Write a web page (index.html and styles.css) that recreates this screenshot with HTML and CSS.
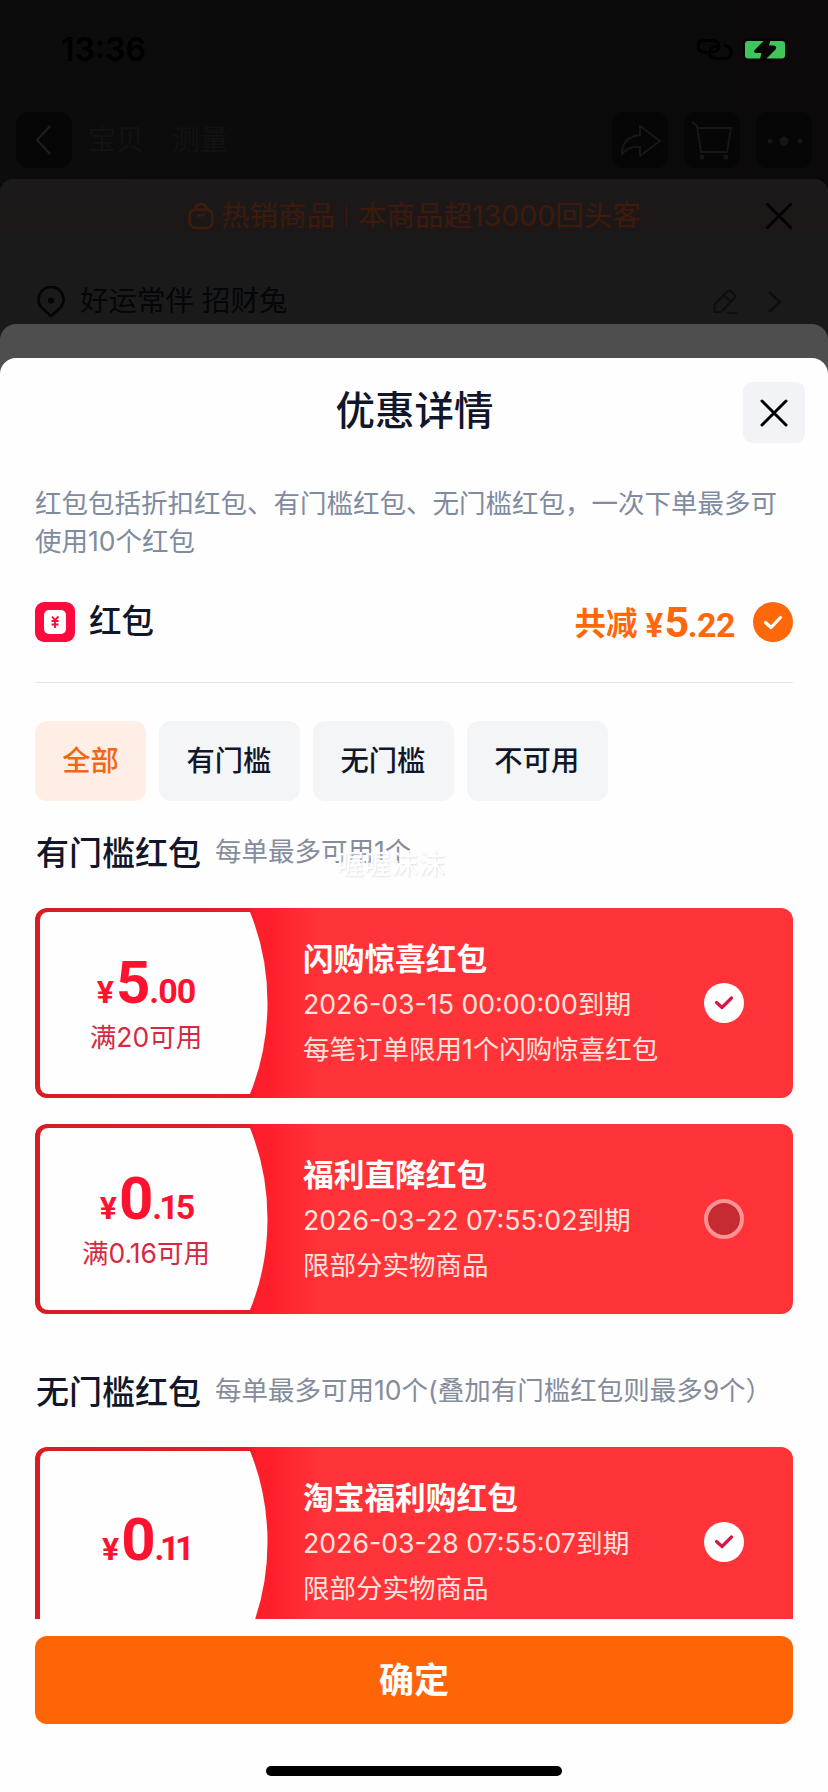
FILE: index.html
```html
<!DOCTYPE html>
<html lang="zh-CN">
<head>
<meta charset="utf-8">
<title>优惠详情</title>
<link rel="stylesheet" href="styles.css">
</head>
<body>
<div class="screen">
  <header class="status">
    <span class="time">13:36</span>
    <span class="status-icons">
      <svg class="link" width="38" height="24" viewBox="0 0 38 24" fill="none" stroke="#000" stroke-width="2.800" stroke-linecap="round"><path d="M10 14.500Q2 13.500 2 8.500Q2 2.500 9 2.500H16Q23 2.500 23 8Q23 13 18 14H16.500"/><path d="M29 7.500Q35.500 9 35.500 14.500Q35 20.500 29 20.500H20Q13.500 20 13.500 14.500Q14 9.500 19 8.500H21"/></svg>
      <svg class="battery" width="46" height="24" viewBox="0 0 46 24"><rect x="1" y="0" width="44" height="23" rx="6" fill="#050505"/><rect x="3" y="3" width="40" height="17.500" rx="3" fill="#3fc55c"/><path d="M24.500 0L12.500 12.300Q11 14.600 14 15H19.500L17.500 23H22L33.500 11.500Q35.500 8.500 32 7.500H27L29 0Z" fill="#050505"/></svg>
    </span>
  </header>
  <nav class="nav">
    <span class="nav-btn"><svg width="56" height="56" viewBox="0 0 56 56" fill="none" stroke="#1e1e1e" stroke-width="2"><path d="M34 14L21 28L34 42"/></svg></span>
    <span class="nav-title"><span>宝贝</span><span>测量</span></span>
    <span class="nav-btn"><svg width="56" height="56" viewBox="0 0 56 56" fill="none" stroke="#171717" stroke-width="2" stroke-linejoin="round"><path d="M28 14L48 29L28 44V35Q18 33 10 42Q10 25 28 23Z"/></svg></span>
    <span class="nav-btn"><svg width="56" height="56" viewBox="0 0 56 56" fill="none" stroke="#171717" stroke-width="2"><path d="M8 10L13 14L17 40H43L47 16H14"/><circle cx="18" cy="45" r="1.500"/><circle cx="42" cy="45" r="1.500"/></svg></span>
    <span class="nav-btn"><svg width="56" height="56" viewBox="0 0 56 56" fill="#151515"><circle cx="14" cy="29" r="2.500"/><circle cx="28" cy="29" r="4.500"/><circle cx="44" cy="29" r="2.500"/></svg></span>
  </nav>
  <div class="under">
    <div class="promo">
      <svg width="26" height="28" viewBox="0 0 26 28" fill="none" stroke="#401c0b" stroke-width="2.400" stroke-linecap="round"><rect x="1.500" y="7.500" width="23" height="18.500" rx="6"/><path d="M7.500 7Q8 2 13 2Q18 2 18.500 7M10 13.500Q15 14 16 12"/></svg>
      <span>热销商品</span><i class="bar"></i><span>本商品超13000回头客</span>
      <svg class="promo-x" width="28" height="28" viewBox="0 0 28 28" stroke="#020202" stroke-width="2.600" stroke-linecap="round"><path d="M2 2L26 26M26 2L2 26"/></svg>
    </div>
    <div class="address">
      <svg width="28" height="32" viewBox="0 0 28 32" fill="none" stroke="#040507" stroke-width="2.600" stroke-linejoin="round"><path d="M14 30L6 23A12.500 12.500 0 1 1 22 23Z"/><circle cx="14" cy="14.500" r="1.800" fill="#040507"/></svg>
      <span class="address-text">好运常伴 招财兔</span>
      <svg width="24" height="26" viewBox="0 0 24 26" fill="none" stroke="#0d0e12" stroke-width="2" stroke-linejoin="round"><path d="M1.500 23V15.500L14.500 2Q16 1 17.500 2L21.500 6Q22.500 7.500 21.500 9L8 23ZM10.500 6L18 13M14 24H24"/></svg>
      <svg class="go" width="16" height="24" viewBox="0 0 16 24" fill="none" stroke="#0d0e12" stroke-width="2.400"><path d="M2 2L13 12L2 22"/></svg>
    </div>
    <div class="middle">
      <main class="sheet">
        <div class="head">
          <h1>优惠详情</h1>
          <button class="close"><svg width="28" height="28" viewBox="0 0 28 28" stroke="#000" stroke-width="3" stroke-linecap="round"><path d="M2 2L26 26M26 2L2 26"/></svg></button>
        </div>
        <p class="desc">红包包括折扣红包、有门槛红包、无门槛红包，一次下单最多可<br>使用10个红包</p>
        <div class="total">
          <svg width="40" height="40" viewBox="0 0 40 40" fill="none"><rect width="40" height="40" rx="9" fill="#ff093f"/><rect x="9" y="8" width="22" height="24" rx="5" fill="#fff"/><path d="M17 14.500L20 18L23.500 14.500M16.500 19H23.500M16.500 22.500H23.500M20 18V26" stroke="#ff093f" stroke-width="1.900"/></svg>
          <span class="total-name">红包</span>
          <span class="total-label">共减</span>
          <span class="total-price"><span class="yen">¥</span><span class="big">5</span><span class="dec">.22</span></span>
          <svg width="40" height="40" viewBox="0 0 40 40" fill="none"><circle cx="20" cy="20" r="20" fill="#ff670b"/><path d="M12.500 20.500L18 25.500L27.500 15.500" stroke="#fff" stroke-width="3.200" stroke-linecap="round" stroke-linejoin="round"/></svg>
        </div>
        <div class="tabs"><span class="tab active">全部</span><span class="tab">有门槛</span><span class="tab">无门槛</span><span class="tab">不可用</span></div>
        <div class="list">
          <div class="group"><h2>有门槛红包</h2><span>每单最多可用1个</span><em class="mark">喔喔沫沫</em></div>
          <article class="card">
            <svg class="panel" width="228" height="182" viewBox="0 0 228 182"><path d="M9 0H210Q227.500 43 227.500 91T210 182H9Q0 182 0 173V9Q0 0 9 0Z" fill="#fefefe"/></svg>
            <div class="amount"><div class="price"><span class="yen">¥</span><span class="big">5</span><span class="dec">.00</span></div><div class="rule">满20可用</div></div>
            <div class="info"><h3>闪购惊喜红包</h3><p>2026-03-15 00:00:00到期</p><p>每笔订单限用1个闪购惊喜红包</p></div>
            <svg width="40" height="40" viewBox="0 0 40 40" fill="none"><circle cx="20" cy="20" r="20" fill="#fff"/><path d="M12.500 19.500L18 24.500L27.500 15" stroke="#d81648" stroke-width="3.200" stroke-linecap="round" stroke-linejoin="round"/></svg>
          </article>
          <article class="card">
            <svg class="panel" width="228" height="182" viewBox="0 0 228 182"><path d="M9 0H210Q227.500 43 227.500 91T210 182H9Q0 182 0 173V9Q0 0 9 0Z" fill="#fefefe"/></svg>
            <div class="amount"><div class="price"><span class="yen">¥</span><span class="big">0</span><span class="dec one">.15</span></div><div class="rule">满0.16可用</div></div>
            <div class="info"><h3>福利直降红包</h3><p>2026-03-22 07:55:02到期</p><p>限部分实物商品</p></div>
            <svg width="40" height="40" viewBox="0 0 40 40"><circle cx="20" cy="20" r="18" fill="#c52b30" stroke="#ff9294" stroke-width="4"/></svg>
          </article>
          <div class="group"><h2>无门槛红包</h2><span>每单最多可用10个(叠加有门槛红包则最多9个）</span></div>
          <article class="card">
            <svg class="panel" width="228" height="182" viewBox="0 0 228 182"><path d="M9 0H210Q227.500 43 227.500 91T210 182H9Q0 182 0 173V9Q0 0 9 0Z" fill="#fefefe"/></svg>
            <div class="amount"><div class="price"><span class="yen">¥</span><span class="big">0</span><span class="dec ones">.11</span></div></div>
            <div class="info"><h3>淘宝福利购红包</h3><p>2026-03-28 07:55:07到期</p><p>限部分实物商品</p></div>
            <svg width="40" height="40" viewBox="0 0 40 40" fill="none"><circle cx="20" cy="20" r="20" fill="#fff"/><path d="M12.500 19.500L18 24.500L27.500 15" stroke="#d81648" stroke-width="3.200" stroke-linecap="round" stroke-linejoin="round"/></svg>
          </article>
        </div>
        <button class="confirm">确定</button>
        <div class="home"></div>
      </main>
    </div>
  </div>
</div>
</body>
</html>
```
FILE: styles.css
```css
* { box-sizing: border-box; margin: 0; padding: 0; }
body { width: 828px; height: 1792px; overflow: hidden; background: #0b0a0b; font-family: Inter, "Noto Sans CJK SC", sans-serif; color: #11162a; }
svg { display: block; flex: none; }
button { border: 0; font-family: inherit; }
.screen { height: 1792px; display: flex; flex-direction: column; background: linear-gradient(90deg, #0d0c0d, #0b0b0b 50%, #0b090a); }
.status { height: 110px; padding: 38px 40px 0 61px; display: flex; justify-content: space-between; align-items: flex-start; }
.time { font-size: 32px; line-height: 24px; font-weight: 600; color: #000; }
.status-icons { display: flex; gap: 8px; }
.nav { height: 69px; padding: 2px 16px 0; display: flex; gap: 16px; align-items: flex-start; }
.nav-btn { width: 56px; height: 56px; border-radius: 12px; background: #060606; }
.nav-title { flex: 1; display: flex; gap: 28px; font-size: 28px; line-height: 56px; color: #131213; }
.under { flex: 1; display: flex; flex-direction: column; background: #1a1a1a; border-radius: 14px 14px 0 0; overflow: hidden; }
.promo { position: relative; height: 54px; padding: 19px 0 0 188px; display: flex; align-items: center; background: linear-gradient(#1c1a1b, #1d1717); color: #3d1a0b; font-size: 28.5px; line-height: 36px; white-space: nowrap; }
.promo svg:first-child { margin-right: 7px; }
.bar { width: 1px; height: 22px; margin: 0 11px; background: #351b14; }
.promo-x { position: absolute; right: 35px; top: 23px; }
.address { height: 91px; padding: 48px 45px 2px 37px; display: flex; align-items: center; font-size: 28.5px; line-height: 36px; color: #050609; }
.address-text { flex: 1; margin-left: 15px; padding-bottom: 1px; }
.go { margin-left: 30px; }
.middle { flex: 1; padding-top: 34px; display: flex; background: #4e4e4e; border-radius: 16px 16px 0 0; }
.sheet { flex: 1; padding: 0 35px; display: flex; flex-direction: column; background: #fefefe; border-radius: 16px 16px 0 0; }
.head { height: 126px; padding-top: 24px; margin-right: -12px; display: grid; grid-template-columns: 62px 1fr 62px; align-items: start; }
.head h1 { grid-column: 2; margin-left: -11px; text-align: center; font-size: 39.5px; line-height: 59px; font-weight: 500; }
.close { width: 62px; height: 61px; border-radius: 9px; background: #f2f3f7; display: grid; place-items: center; }
.desc { height: 118px; font-size: 26.5px; line-height: 38px; color: #7f8b9e; white-space: nowrap; }
.total { height: 81px; display: flex; align-items: flex-start; border-bottom: 1px solid #e6e6e8; white-space: nowrap; line-height: 40px; }
.total-name { flex: 1; margin-left: 14px; font-size: 32.5px; font-weight: 500; }
.total-label { font-size: 31.5px; line-height: 43px; font-weight: 700; color: #ff670b; }
.total-price { margin: 0 18px 0 8px; color: #ff670b; font-family: Roboto, sans-serif; font-weight: 700; display: flex; align-items: baseline; }
.total-price .yen { width: 19px; font-size: 33px; letter-spacing: -1px; }
.total-price .dec { font-size: 34px; letter-spacing: -0.5px; }
.total-price .big { font-size: 43px; line-height: 40px; letter-spacing: -1.5px; }
.tabs { display: flex; gap: 13px; padding-top: 38px; }
.tab { height: 80px; padding: 0 28.5px 0 27.5px; line-height: 80px; font-size: 28.3px; font-weight: 500; border-radius: 12px; background: #f4f5f7; }
.tab.active { padding: 0 27.2px; background: #ffeee5; color: #f4660f; }
.list { height: 818px; overflow: hidden; }
.group { position: relative; display: flex; align-items: center; height: 107px; padding-bottom: 4px; white-space: nowrap; }
.group h2 { width: 180px; font-size: 33px; line-height: 48px; font-weight: 500; padding-left: 1px; }
.group span { padding-bottom: 4px; font-size: 26.5px; line-height: 38px; color: #858c9c; }
.mark { position: absolute; left: 302px; top: 46px; font-style: normal; font-size: 27px; line-height: 36px; color: #fff; text-shadow: 1px 1px 2px #e0e0e0; }
.card { position: relative; width: 758px; height: 190px; margin-bottom: 26px; padding-right: 49px; display: flex; align-items: center; border-radius: 12px; background: linear-gradient(90deg, #d91b22 0, #e91c25 214px, #ff1f2b 222px, #ff1f2b 235px, #ff3338 285px); }
.panel { position: absolute; left: 5px; top: 4px; }
.amount { position: relative; width: 222px; padding-top: 5px; text-align: center; color: #ff1230; white-space: nowrap; }
.price { display: flex; justify-content: center; align-items: baseline; font-family: Roboto, sans-serif; font-weight: 700; line-height: 56px; }
.price .yen { margin-right: 3px; font-size: 32px; letter-spacing: -1px; }
.price .dec { font-size: 34px; letter-spacing: -1px; }
.price .one { letter-spacing: -3px; }
.price .ones { letter-spacing: -4.5px; }
.price .big { font-size: 60px; letter-spacing: -1px; }
.rule { margin-top: -2px; font-size: 26.5px; line-height: 38px; color: #d52943; }
.info { flex: 1; margin-left: 46px; padding-top: 1px; color: #ffe3de; font-size: 26.5px; white-space: nowrap; }
.info h3 { font-size: 30.7px; line-height: 46px; font-weight: 700; color: #fff; }
.info p { line-height: 45px; }
.info p:nth-child(2) { font-size: 26.7px; }
.card > svg:last-child { position: relative; }
.confirm { width: 758px; height: 88px; margin-top: 17px; flex: none; border-radius: 12px; background: #ff6507; color: #fff; font-size: 35px; font-weight: 700; line-height: 88px; }
.home { align-self: center; width: 296px; height: 10px; margin-top: 42px; border-radius: 5px; background: #000; }
```
